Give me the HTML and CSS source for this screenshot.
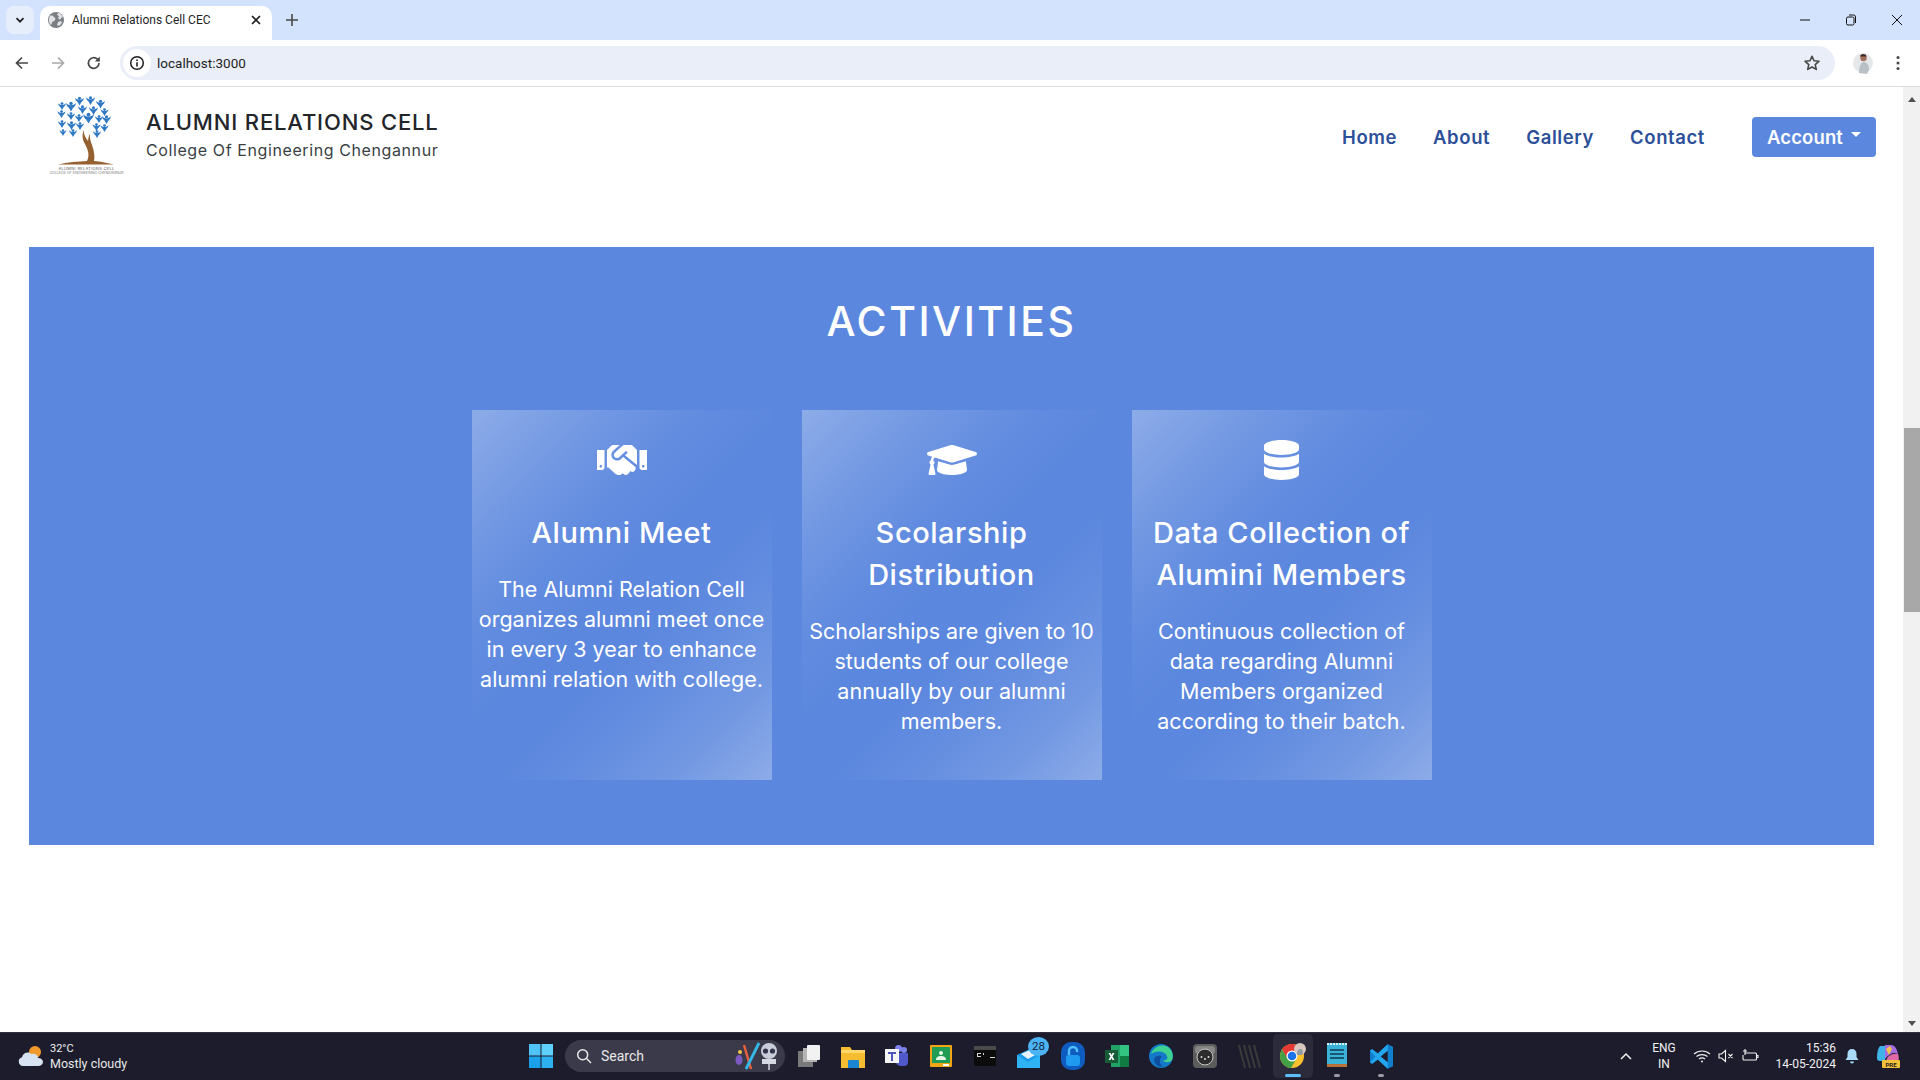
FILE: index.html
```html
<!DOCTYPE html>
<html lang="en">
<head>
<meta charset="utf-8">
<title>Alumni Relations Cell CEC</title>
<link rel="stylesheet" href="styles.css">
</head>
<body>
<svg class="defs" width="0" height="0" aria-hidden="true">
  <symbol id="fig" viewBox="0 0 20 20"><circle cx="10" cy="4" r="3.500"/><path d="M0 3c3 3 6 4.500 10 4.500S17 6 20 3c-1 6-4 8-6 10l-4 7-4-7C4 11 1 9 0 3z"/></symbol>
</svg>
<div class="window">
  <div class="tabstrip">
    <button class="tab-list"><svg width="12" height="12" viewBox="0 0 12 12"><path d="M2.5 4.2 6 7.7l3.5-3.5" fill="none" stroke="#1f1f1f" stroke-width="1.7"/></svg></button>
    <div class="tab">
      <svg class="globe" width="16" height="16" viewBox="0 0 16 16"><circle cx="8" cy="8" r="8" fill="#7b7e83"/><path d="M2 4c2-1 3 0 4 1s2 1 1 3-3 1-3 3l-1 2C1 11 0 7 2 4zM10 1c2 0 4 2 5 4l-2 1-1 2-2-2 1-2-2-1zM10 10l3-1 1 2-3 3-2-1z" fill="#dfe1e5"/></svg>
      <span class="tab-title">Alumni Relations Cell CEC</span>
      <svg class="tab-close" width="12" height="12" viewBox="0 0 12 12"><path d="M2 2l8 8M10 2l-8 8" stroke="#1f1f1f" stroke-width="1.7"/></svg>
    </div>
    <svg class="new-tab" width="14" height="14" viewBox="0 0 14 14"><path d="M7 1v12M1 7h12" stroke="#474747" stroke-width="1.6"/></svg>
    <div class="win-controls">
      <svg width="12" height="12" viewBox="0 0 12 12"><path d="M1 6h10" stroke="#111" stroke-width="1"/></svg>
      <svg width="12" height="12" viewBox="0 0 12 12"><rect x="1.5" y="3" width="7.5" height="8" rx="1.5" fill="none" stroke="#111"/><path d="M4 1h4.5A2 2 0 0 1 10.500 3v6" fill="none" stroke="#111"/></svg>
      <svg width="12" height="12" viewBox="0 0 12 12"><path d="M1 1l10 10M11 1 1 11" stroke="#111" stroke-width="1"/></svg>
    </div>
  </div>
  <div class="toolbar">
    <svg class="tool" width="16" height="16" viewBox="0 0 16 16"><path d="M14 8H2.800M8 2.500 2.500 8 8 13.500" fill="none" stroke="#474747" stroke-width="1.700"/></svg>
    <svg class="tool" width="16" height="16" viewBox="0 0 16 16"><path d="M2 8h11.200M8 2.500 13.500 8 8 13.500" fill="none" stroke="#a8a8a8" stroke-width="1.700"/></svg>
    <svg class="tool" width="16" height="16" viewBox="0 0 16 16"><path d="M13 8a5.300 5.300 0 1 1-1.600-3.800L13 5.800" fill="none" stroke="#474747" stroke-width="1.700"/><path d="M13.800 1.600v5h-5z" fill="#474747"/></svg>
    <div class="omnibox">
      <span class="info-chip"><svg width="16" height="16" viewBox="0 0 16 16"><circle cx="8" cy="8" r="6.300" fill="none" stroke="#1f1f1f" stroke-width="1.500"/><path d="M8 7.200v4.300M8 4.400v1.600" stroke="#1f1f1f" stroke-width="1.600"/></svg></span>
      <span class="url">localhost:3000</span>
      <svg class="star" width="18" height="18" viewBox="0 0 18 18"><path d="M9 2.300l2 4.500 4.900.5-3.700 3.300 1.100 4.800L9 13l-4.300 2.400 1.100-4.800L2.100 7.300 7 6.800z" fill="none" stroke="#474747" stroke-width="1.600" stroke-linejoin="round"/></svg>
    </div>
    <svg class="avatar" width="20" height="24" viewBox="0 0 20 24"><circle cx="10" cy="12" r="10" fill="#e6e7e9"/><path d="M6 22c0-7 2-11 5-11s5 3 5 8l-2 4z" fill="#b9c1c6"/><circle cx="10.500" cy="7" r="3.200" fill="#a2705a"/><path d="M7 5.500c0-3 6-3.500 6.500 0z" fill="#3d2b24"/></svg>
    <svg class="menu-dots" width="4" height="16" viewBox="0 0 4 16"><circle cx="2" cy="2.500" r="1.500" fill="#474747"/><circle cx="2" cy="8" r="1.500" fill="#474747"/><circle cx="2" cy="13.500" r="1.500" fill="#474747"/></svg>
  </div>

  <div class="viewport">
    <main class="page">
      <header class="site-header">
        <a class="brand">
          <span class="logo">
            <svg class="tree" width="77" height="70" viewBox="0 0 77 70">
              <path d="M10 68.500C20 66 30 65.500 39 65c3-6 1-11-2-17-3-5-3-10-1-14-.5 5 2 8 4 11 .5-3 .5-5 2-7-.5 4 .5 7 2 11 2 6 3 11 2 16 7 .5 14 2 20 3.500z" fill="#95602f"/>
              <g fill="#2f78c4">
                <use href="#fig" x="27" y="0" width="9" height="10"/><use href="#fig" x="38" y="0" width="9" height="9"/><use href="#fig" x="48" y="3" width="9" height="10"/>
                <use href="#fig" x="10" y="6" width="8" height="8"/><use href="#fig" x="18" y="5" width="10" height="11"/><use href="#fig" x="30" y="9" width="9" height="9"/><use href="#fig" x="41" y="10" width="9" height="9"/><use href="#fig" x="52" y="12" width="9" height="8"/>
                <use href="#fig" x="9" y="14" width="9" height="8"/><use href="#fig" x="19" y="16" width="8" height="8"/><use href="#fig" x="27" y="18" width="8" height="8"/><use href="#fig" x="35" y="15" width="11" height="14"/><use href="#fig" x="47" y="19" width="8" height="8"/><use href="#fig" x="54" y="18" width="9" height="11"/>
                <use href="#fig" x="9" y="24" width="10" height="8"/><use href="#fig" x="19" y="25" width="9" height="9"/><use href="#fig" x="28" y="26" width="8" height="8"/><use href="#fig" x="44" y="27" width="9" height="8"/><use href="#fig" x="52" y="28" width="9" height="8"/>
                <use href="#fig" x="10" y="33" width="10" height="7"/><use href="#fig" x="20" y="33" width="10" height="8"/><use href="#fig" x="44" y="34" width="10" height="8"/>
              </g>
            </svg>
            <span class="logo-line-a">ALUMNI RELATIONS CELL</span>
            <span class="logo-line-b">COLLEGE OF ENGINEERING CHENGANNUR</span>
          </span>
          <span class="brand-text">
            <span class="brand-title">ALUMNI RELATIONS CELL</span>
            <span class="brand-sub">College Of Engineering Chengannur</span>
          </span>
        </a>
        <nav class="nav">
          <a class="nav-link">Home</a>
          <a class="nav-link">About</a>
          <a class="nav-link">Gallery</a>
          <a class="nav-link">Contact</a>
          <a class="account">Account<span class="caret"></span></a>
        </nav>
      </header>

      <section class="activities">
        <h2 class="section-title">ACTIVITIES</h2>
        <div class="cards">
          <article class="card">
            <svg class="card-icon" width="50" height="40" viewBox="0 0 640 512"><path d="M434.700 64h-85.900c-8 0-15.700 3-21.600 8.400l-98.300 90c-.1.1-.2.300-.3.400-16.600 15.600-16.300 40.500-2.100 56 12.700 13.900 39.400 17.600 56.100 2.700.1-.1.300-.1.400-.2l79.900-73.200c6.500-5.900 16.700-5.500 22.600 1 6 6.500 5.500 16.600-1 22.600l-26.100 23.900L504 313.800c2.900 2.400 5.500 5 7.900 7.700V128l-54.600-54.600c-5.900-6-14.100-9.400-22.600-9.400zM544 128.200v223.900c0 17.700 14.300 32 32 32h64V128.200h-96zm48 223.900c-8.800 0-16-7.200-16-16s7.200-16 16-16 16 7.200 16 16-7.200 16-16 16zM0 384h64c17.700 0 32-14.300 32-32V128.200H0V384zm48-63.900c8.800 0 16 7.200 16 16s-7.200 16-16 16-16-7.200-16-16c0-8.900 7.200-16 16-16zm435.900 18.600L334.600 217.500l-30 27.500c-29.700 27.100-75.200 24.500-101.700-4.400-26.900-29.400-24.800-74.900 4.400-101.700L289.100 64h-83.800c-8.500 0-16.600 3.400-22.600 9.400L128 128v223.900h18.300l90.500 81.900c27.400 22.300 67.700 18.100 90-9.300l.2-.2 17.900 15.500c15.900 13 39.400 10.500 52.300-5.400l31.400-38.600 5.400 4.400c13.700 11.100 33.900 9.100 45-4.700l9.500-11.700c11.200-13.800 9.100-33.900-4.600-45z"/></svg>
            <h3 class="card-title">Alumni Meet</h3>
            <p class="card-text">The Alumni Relation Cell organizes alumni meet once in every 3 year to enhance alumni relation with college.</p>
          </article>
          <article class="card">
            <svg class="card-icon" width="50" height="40" viewBox="0 0 640 512"><path d="M622.340 153.200L343.400 67.500c-15.200-4.670-31.600-4.670-46.790 0L17.660 153.200c-23.540 7.230-23.540 38.360 0 45.590l48.630 14.940c-10.670 13.190-17.230 29.280-17.880 46.900C38.780 266.150 32 276.110 32 288c0 10.780 5.680 19.850 13.860 25.650L20.330 428.530C18.110 438.520 25.710 448 35.940 448h56.110c10.240 0 17.840-9.480 15.620-19.470L82.140 313.650C90.320 307.850 96 298.780 96 288c0-11.570-6.470-21.250-15.660-26.870.76-15.020 8.440-28.300 20.690-36.720L296.600 284.500c9.060 2.780 26.440 6.250 46.790 0l278.950-85.700c23.550-7.240 23.550-38.360 0-45.600zM352.790 315.090c-28.530 8.760-52.840 3.920-65.590 0l-145.020-44.550L128 384c0 35.350 85.960 64 192 64s192-28.650 192-64l-14.180-113.470-145.030 44.560z"/></svg>
            <h3 class="card-title">Scolarship Distribution</h3>
            <p class="card-text">Scholarships are given to 10 students of our college annually by our alumni members.</p>
          </article>
          <article class="card">
            <svg class="card-icon" width="35" height="40" viewBox="0 0 448 512"><path d="M448 73.143v45.714C448 159.143 347.667 192 224 192S0 159.143 0 118.857V73.143C0 32.857 100.333 0 224 0s224 32.857 224 73.143zM448 176v102.857C448 319.143 347.667 352 224 352S0 319.143 0 278.857V176c48.125 33.143 136.208 48.572 224 48.572S399.874 209.143 448 176zm0 160v102.857C448 479.143 347.667 512 224 512S0 479.143 0 438.857V336c48.125 33.143 136.208 48.572 224 48.572S399.874 369.143 448 336z"/></svg>
            <h3 class="card-title">Data Collection of Alumini Members</h3>
            <p class="card-text">Continuous collection of data regarding Alumni Members organized according to their batch.</p>
          </article>
        </div>
      </section>
    </main>
    <div class="scrollbar">
      <span class="arrow-up"></span>
      <span class="thumb"></span>
      <span class="arrow-down"></span>
    </div>
  </div>

  <footer class="taskbar">
    <div class="weather">
      <svg width="26" height="24" viewBox="0 0 26 24"><circle cx="17" cy="8" r="6" fill="#f09a2e"/><path d="M5 22a4.500 4.500 0 0 1-1-8.800C5 9 10 7 13 10c4-1 7 1 7 4 3 0 5 2 5 4s-2 4-5 4z" fill="#d7e3f3"/></svg>
      <div class="weather-text"><span class="temp">32°C</span><span class="cond">Mostly cloudy</span></div>
    </div>
    <div class="task-center">
      <svg class="win-logo" width="24" height="24" viewBox="0 0 24 24"><path d="M0 0h11.500v11.500H0z" fill="#4fc3f7"/><path d="M12.500 0H24v11.500H12.500z" fill="#5fd0fb"/><path d="M0 12.500h11.500V24H0z" fill="#1ba1ea"/><path d="M12.500 12.500H24V24H12.500z" fill="#2db0f0"/></svg>
      <div class="task-search">
        <svg width="16" height="16" viewBox="0 0 16 16"><circle cx="6.700" cy="6.700" r="5" fill="none" stroke="#e8e8e8" stroke-width="1.500"/><path d="M10.300 10.300 15 15" stroke="#e8e8e8" stroke-width="1.500"/></svg>
        <span class="search-label">Search</span>
        <svg class="search-art" width="46" height="28" viewBox="0 0 46 28"><circle cx="5" cy="10" r="2" fill="#f3c44c"/><ellipse cx="4" cy="18" rx="3.500" ry="5" fill="#7b5bc2"/><path d="M9 3l7 24" stroke="#e5603f" stroke-width="2.500"/><path d="M24 1 11 27" stroke="#35b9e6" stroke-width="2.800"/><circle cx="34" cy="9" r="8" fill="#c9cdd9"/><circle cx="30.500" cy="9" r="2.600" fill="#33334a"/><circle cx="37.500" cy="9" r="2.600" fill="#33334a"/><rect x="27" y="17" width="14" height="5" fill="#d5d8e3"/><path d="M34 22v6" stroke="#d5d8e3" stroke-width="1.500"/></svg>
      </div>
      <div class="task-icons">
        <span class="ti"><svg width="24" height="24" viewBox="0 0 24 24"><rect x="1" y="7" width="15" height="16" fill="#7a7a7a"/><rect x="6" y="4" width="14" height="14" fill="#b4b4b4"/><rect x="10" y="1" width="13" height="15" rx="1" fill="#f2f2f2"/></svg></span>
        <span class="ti"><svg width="24" height="24" viewBox="0 0 24 24"><path d="M0 3h9l2 3h13v18H0z" fill="#f5bd2f"/><path d="M0 6h24v3H0z" fill="#fcd96a"/><path d="M8 16h9a1 1 0 0 1 1 1v7H7v-7a1 1 0 0 1 1-1z" fill="#1c85cf"/></svg></span>
        <span class="ti"><svg width="24" height="24" viewBox="0 0 24 24"><circle cx="19" cy="6" r="3" fill="#7b83eb"/><circle cx="13.500" cy="4.500" r="3.500" fill="#7b83eb"/><path d="M10 9h13v9a4 4 0 0 1-4 4h-3a6 6 0 0 1-6-6z" fill="#5059c9"/><rect x="0" y="5" width="14" height="14" fill="#f5f5f5"/><path d="M3 8h8v2H8v7H6v-7H3z" fill="#4b53bc"/></svg></span>
        <span class="ti"><svg width="24" height="24" viewBox="0 0 24 24"><rect x="1" y="1" width="22" height="22" rx="1" fill="#f2a516"/><rect x="3" y="3" width="18" height="16" fill="#1f9d55"/><circle cx="12" cy="9" r="2" fill="#e8f5e9"/><path d="M7 16c0-3 2-4 5-4s5 1 5 4z" fill="#e8f5e9"/><rect x="14" y="20" width="6" height="2" fill="#fff"/></svg></span>
        <span class="ti"><svg width="24" height="24" viewBox="0 0 24 24"><rect x="1" y="2" width="22" height="20" rx="1" fill="#0c0c0c"/><rect x="1" y="2" width="22" height="4" fill="#4a4a4a"/><path d="M4 9h4v1H5v2h3v1H4zM10 9h1v2h-1zM13 9l2 4M17 13h5v1h-5z" stroke="none" fill="#d8d8d8"/></svg></span>
        <span class="ti ti-mail"><svg width="26" height="26" viewBox="0 0 26 26"><path d="M1 12 16 5l8 7v13H1z" fill="#1a9bea"/><path d="M1 12l11 7 12-7v13H1z" fill="#2fb3f5"/><path d="M5 11 16 6l5 5-9 5z" fill="#e8f4fd"/></svg><span class="badge">28</span></span>
        <span class="ti"><svg width="24" height="28" viewBox="0 0 24 28"><rect x="0" y="0" width="24" height="28" rx="10" fill="#0f5cc0"/><rect x="5" y="13" width="14" height="11" rx="3" fill="#1e9bf0"/><path d="M8 13V9a4 4 0 0 1 8 0v1" fill="none" stroke="#52c1ff" stroke-width="2.400"/></svg></span>
        <span class="ti"><svg width="24" height="24" viewBox="0 0 24 24"><rect x="6" y="1" width="18" height="22" fill="#21a366"/><rect x="15" y="1" width="9" height="11" fill="#33c481"/><rect x="15" y="12" width="9" height="11" fill="#107c41"/><rect x="0" y="6" width="13" height="13" fill="#185c37"/><path d="M3.500 9h2l1 2 1-2h2l-2 3.500 2 3.500h-2l-1-2-1 2h-2l2-3.500z" fill="#fff"/></svg></span>
        <span class="ti"><svg width="24" height="24" viewBox="0 0 24 24"><circle cx="12" cy="12" r="12" fill="#1479c9"/><path d="M2 10C4 3 12-1 19 3c4 3 6 8 4 13-2 3-8 3-9 0 3 1 5-1 4-4C16 7 8 6 2 10z" fill="#3fd18f"/><path d="M5 15c0 5 4 8 9 8-4-3-4-8-1-11-4-1-7 0-8 3z" fill="#0d4f9e"/></svg></span>
        <span class="ti"><svg width="24" height="24" viewBox="0 0 24 24"><rect x="0" y="0" width="24" height="24" rx="4" fill="#5c5c5c"/><rect x="2" y="2" width="20" height="8" rx="3" fill="#868686"/><circle cx="12" cy="13" r="8" fill="#2d2d2d" stroke="#c8c8c8"/><circle cx="8.500" cy="13" r="1" fill="#ddd"/><circle cx="12" cy="15" r="1" fill="#ddd"/><circle cx="15.500" cy="13" r="1" fill="#ddd"/></svg></span>
        <span class="ti"><svg width="26" height="26" viewBox="0 0 26 26" fill="none" stroke="#3a3a3a" stroke-width="2"><path d="M3 2l6 23M8 2l6 23M13 2l6 23M18 2l6 23"/></svg></span>
        <span class="ti ti-active"><svg width="26" height="26" viewBox="0 0 26 26"><circle cx="12" cy="13" r="12" fill="#fbc02d"/><path d="M12 1A12 12 0 0 0 2 6.500L7.500 16 12 8h10.500A12 12 0 0 0 12 1z" fill="#e53935"/><path d="M2 6.500A12 12 0 0 0 11 25l5.500-9.500H7.500z" fill="#43a047"/><circle cx="12" cy="13" r="5.500" fill="#fff"/><circle cx="12" cy="13" r="4.300" fill="#1a73e8"/><circle cx="20" cy="6" r="6" fill="#d7c7be"/><path d="M17 12c0-4 1-6 3-6s3 2 3 4l-1 2z" fill="#8f9aa3"/></svg><span class="run-active"></span></span>
        <span class="ti"><svg width="24" height="28" viewBox="0 0 24 28"><rect x="2" y="1" width="20" height="24" fill="#3bb3d9"/><rect x="2" y="22" width="20" height="3" fill="#b9713a"/><path d="M2 2h20" stroke="#d6f1fa" stroke-width="2" stroke-dasharray="2 1"/><path d="M5 8h14M5 12h14M5 16h14" stroke="#0d3a4f" stroke-width="1.500"/></svg><span class="run-dot"></span></span>
        <span class="ti"><svg width="25" height="25" viewBox="0 0 100 100"><path d="M96 11 75 1 35 38 13 21 4 26v48l9 5 22-17 40 37 21-10z" fill="#0f7fcc"/><path d="M75 1v98L35 62 13 79l-9-5 22-24L4 26l9-5 22 17z" fill="#23a6f0"/><path d="M75 27 47 50l28 23z" fill="#1b1b2b"/></svg><span class="run-dot"></span></span>
      </div>
    </div>
    <div class="tray">
      <svg class="tray-chev" width="12" height="8" viewBox="0 0 12 8"><path d="M1 7l5-5 5 5" fill="none" stroke="#f0f0f0" stroke-width="1.500"/></svg>
      <div class="lang"><span>ENG</span><span>IN</span></div>
      <svg class="tray-wifi" width="18" height="14" viewBox="0 0 18 14" fill="none" stroke="#f0f0f0" stroke-width="1.200"><path d="M1 5c4.500-4 11.500-4 16 0M3.500 7.500c3-2.500 8-2.500 11 0M6 10c1.800-1.400 4.200-1.400 6 0"/><circle cx="9" cy="12.500" r="1" fill="#f0f0f0" stroke="none"/></svg>
      <svg class="tray-sound" width="17" height="14" viewBox="0 0 17 14" fill="none" stroke="#f0f0f0" stroke-width="1.100"><path d="M1 5h2.500L7.500 1.500v11L3.500 9H1zM10.500 5l4 4M14.500 5l-4 4"/></svg>
      <svg class="tray-batt" width="18" height="14" viewBox="0 0 18 14" fill="none" stroke="#f0f0f0" stroke-width="1.100"><path d="M4 4h10.500a1 1 0 0 1 1 1v5a1 1 0 0 1-1 1H3a1 1 0 0 1-1-1V6M15.500 6.500h1.500v2h-1.500M4 0v6M2 2h4"/></svg>
      <div class="clock"><span>15:36</span><span>14-05-2024</span></div>
      <svg class="tray-bell" width="14" height="16" viewBox="0 0 14 16"><path d="M7 1c3 0 4.500 2 4.500 5v3l2 3H.5l2-3V6C2.500 3 4 1 7 1z" fill="#a9dcf8"/><path d="M5 13.500h4a2 2 0 0 1-4 0z" fill="#a9dcf8"/></svg>
      <svg class="tray-copilot" width="24" height="26" viewBox="0 0 24 26"><path d="M4 3h8c-2 4-3 10-3 15H4a3 3 0 0 1-3-3C1 9 2 5 4 3z" fill="#3fb4e8"/><path d="M9 2h6c4 0 6 4 7 9-4-2-8-1-13 5z" fill="#a56de2"/><path d="M10 6l4-3 2 3-3 6z" fill="#f2c14e"/><path d="M10 18c1-5 6-8 12-7 1 3 1 5 0 7z" fill="#e06aa8"/><rect x="6" y="17" width="18" height="8" rx="1" fill="#f3c13a"/><text class="pre" x="15" y="23.500" text-anchor="middle">PRE</text></svg>
    </div>
  </footer>
</div>
</body>
</html>
```

FILE: styles.css
```css
* { box-sizing: border-box; }
html, body { margin: 0; height: 100%; overflow: hidden; }
body { font-family: Inter, "Liberation Sans", sans-serif; background: #fff; }
.defs { position: absolute; }
.window { display: flex; flex-direction: column; height: 1080px; }

/* Browser chrome */
.tabstrip { display: flex; align-items: flex-end; height: 40px; background: #d3e3fd; padding-left: 6px; }
.tab-list { display: flex; align-items: center; justify-content: center; width: 28px; height: 28px; margin-bottom: 6px; border: 0; border-radius: 8px; background: #e6eefc; padding: 0; }
.tab { display: flex; align-items: center; width: 232px; height: 34px; margin-left: 6px; padding: 0 10px 6px 8px; background: #fff; border-radius: 10px 10px 0 0; }
.globe { flex: none; }
.tab-title { flex: 1; margin-left: 8px; font: 12px Roboto, sans-serif; color: #1f1f1f; white-space: nowrap; }
.tab-close { flex: none; }
.new-tab { margin: 0 0 13px 13px; }
.win-controls { display: flex; gap: 34px; margin-left: auto; padding-right: 17px; margin-bottom: 14px; }
.toolbar { display: flex; align-items: center; height: 47px; background: #fff; border-bottom: 1px solid #dadce0; padding-left: 14px; }
.tool { flex: none; margin-right: 20px; }
.omnibox { display: flex; align-items: center; flex: none; width: 1715px; height: 34px; margin-left: -2px; background: #e9eef8; border-radius: 17px; padding: 0 14px 0 3px; }
.info-chip { display: flex; align-items: center; justify-content: center; width: 28px; height: 28px; border-radius: 50%; background: #fff; }
.url { margin-left: 6px; font: 13.500px Roboto, sans-serif; color: #1f1f1f; }
.star { margin-left: auto; }
.avatar { flex: none; margin-left: 18px; }
.menu-dots { flex: none; margin-left: 23px; }

/* Page */
.viewport { flex: 1; display: flex; min-height: 0; }
.page { flex: 1; min-width: 0; overflow: hidden; }
.site-header { display: flex; align-items: center; justify-content: space-between; height: 99px; padding: 0 27px 0 48px; }
.brand { display: flex; align-items: center; gap: 21px; margin-top: -2px; }
.logo { display: flex; flex-direction: column; align-items: center; width: 77px; }
.logo-line-a { margin-top: 1px; font-size: 4px; line-height: 4px; color: #555; white-space: nowrap; letter-spacing: .3px; }
.logo-line-b { font-size: 3.600px; line-height: 4px; color: #777; white-space: nowrap; }
.brand-text { display: flex; flex-direction: column; }
.brand-title { font-size: 22px; line-height: 29px; font-weight: 500; color: #212529; letter-spacing: .85px; white-space: nowrap; }
.brand-sub { font-size: 16px; line-height: 27px; color: #3a3f44; letter-spacing: .6px; white-space: nowrap; }
.nav { display: flex; align-items: center; gap: 36px; }
.nav-link { font-size: 18.500px; font-weight: 600; color: #2c4f99; letter-spacing: .6px; }
.account { display: flex; align-items: center; justify-content: center; width: 124px; height: 40px; margin-left: 11px; background: #5b87de; border-radius: 4px; color: #fff; font-size: 18.500px; font-weight: 600; letter-spacing: .1px; }
.caret { margin: -4px 0 0 8px; border-top: 5px solid #fff; border-left: 5px solid transparent; border-right: 5px solid transparent; }

.activities { margin: 61px 29px 0; height: 598px; background: #5b87de; padding-top: 50px; }
.section-title { margin: 0 0 65px; font-size: 41px; line-height: 48px; font-weight: 500; color: #fff; text-align: center; letter-spacing: 2.500px; }
.cards { display: flex; justify-content: center; gap: 30px; }
.card { display: flex; flex-direction: column; align-items: center; width: 300px; height: 370px; padding: 30px 5px 0; text-align: center; color: #fff; background: linear-gradient(135deg, rgba(255,255,255,.3) 0%, rgba(255,255,255,.14) 20%, rgba(255,255,255,.04) 35%, rgba(255,255,255,0) 48%, rgba(255,255,255,0) 58%, rgba(255,255,255,.05) 70%, rgba(255,255,255,.15) 85%, rgba(255,255,255,.3) 100%); }
.card-icon { flex: none; fill: #fff; }
.card-title { margin: 32px 0 20px; font-size: 29px; line-height: 42px; font-weight: 500; letter-spacing: .55px; }
.card-text { margin: 0; font-size: 21.500px; line-height: 30px; font-weight: 400; }

.scrollbar { display: flex; flex-direction: column; align-items: center; flex: none; width: 17px; background: #f1f1f1; padding-top: 10px; }
.arrow-up { border-bottom: 5px solid #505050; border-left: 4px solid transparent; border-right: 4px solid transparent; }
.thumb { width: 16px; height: 184px; margin-top: 326px; background: #a8a8a8; }
.arrow-down { margin-top: auto; margin-bottom: 6px; border-top: 5px solid #505050; border-left: 4px solid transparent; border-right: 4px solid transparent; }

/* Taskbar */
.taskbar { display: flex; align-items: center; height: 48px; padding-bottom: 1px; background: #1c1c2c; color: #f2f2f2; font-family: Roboto, sans-serif; border-top: 1px solid #30303f; }
.weather { display: flex; align-items: center; flex: none; width: 529px; padding-left: 18px; gap: 6px; }
.weather-text { display: flex; flex-direction: column; }
.temp { font-size: 11px; line-height: 15px; }
.cond { font-size: 12.500px; line-height: 16px; color: #e8e8e8; }
.task-center { display: flex; align-items: center; flex: none; }
.win-logo { flex: none; }
.task-search { display: flex; align-items: center; width: 220px; height: 32px; margin-left: 12px; padding: 0 4px 0 11px; border-radius: 16px; background: #3a3a4a; }
.search-label { margin-left: 9px; font-size: 14px; color: #e8e8e8; }
.search-art { margin-left: auto; }
.task-icons { display: flex; margin-left: 2px; }
.ti { position: relative; display: flex; align-items: center; justify-content: center; width: 44px; height: 44px; }
.ti-active { background: #2b2b3c; border-radius: 5px; width: 40px; margin: 0 2px; }
.badge { position: absolute; top: 3px; left: 21px; width: 21px; height: 19px; border-radius: 50%; background: #4cb4f5; color: #10243c; font-size: 11.500px; line-height: 19px; text-align: center; }
.run-active { position: absolute; bottom: 1px; left: 12px; width: 16px; height: 3px; border-radius: 2px; background: #5cc0f8; }
.run-dot { position: absolute; bottom: 1px; left: 19px; width: 6px; height: 3px; border-radius: 2px; background: #9a9aa6; }
.tray { display: flex; align-items: center; flex: 1; position: relative; padding-left: 217px; }
.tray-chev { flex: none; }
.lang { display: flex; flex-direction: column; align-items: center; width: 34px; margin-left: 15px; font-size: 12px; line-height: 16px; }
.tray-wifi { flex: none; margin-left: 12px; }
.tray-sound { flex: none; margin-left: 7px; }
.tray-batt { flex: none; margin-left: 6px; }
.clock { display: flex; flex-direction: column; align-items: flex-end; width: 70px; margin-left: 7px; font-size: 12px; line-height: 16px; }
.tray-bell { flex: none; margin-left: 9px; }
.tray-copilot { flex: none; margin-left: 17px; }
.pre { font: 700 6px Roboto, sans-serif; fill: #222; }
```
